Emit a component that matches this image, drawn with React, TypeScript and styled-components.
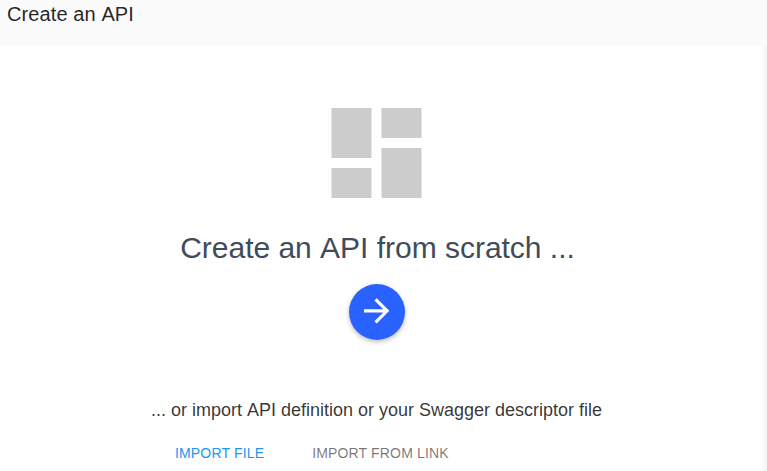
import React from "react";
import styled, { createGlobalStyle } from "styled-components";

const GlobalStyle = createGlobalStyle`
  * { box-sizing: border-box; }
  body { margin: 0; background: #fbfbfb; overflow: hidden; font-family: "Liberation Sans", Arial, sans-serif; font-kerning: none; }
`;

const Page = styled.div`
  display: flex;
  flex-direction: column;
  height: 471px;
`;

const Header = styled.header`
  height: 46px;
  flex: none;
  padding: 2px 7px 0;
`;

const Title = styled.h1`
  margin: 0;
  font-size: 20px;
  line-height: 24px;
  font-weight: 400;
  letter-spacing: 0.1px;
  color: rgba(0, 0, 0, 0.87);
`;

const Panel = styled.main`
  flex: 1;
  padding: 47px 14px 0 0;
  display: flex;
  flex-direction: column;
  align-items: center;
  background: linear-gradient(to left, #f3f3f3, #fcfcfc 4px, #fff 8px);
`;

const DashboardIcon = styled.svg`
  width: 120px;
  height: 120px;
  flex: none;
  fill: #ccc;
`;

const Heading = styled.h2`
  margin: 17px 0 0;
  padding-left: 2px;
  font-size: 30px;
  line-height: 36px;
  font-weight: 400;
  letter-spacing: -0.02px;
  color: #3f4c5a;
`;

const RoundButton = styled.button`
  display: grid;
  place-items: center;
  flex: none;
  width: 56px;
  height: 56px;
  margin-top: 18px;
  padding: 0 0 3px;
  border: 0;
  border-radius: 50%;
  background: #2962ff;
  box-shadow: 0 2px 5px rgba(0, 0, 0, 0.26);
  cursor: pointer;
`;

const ArrowIcon = styled.svg`
  width: 38px;
  height: 38px;
  fill: #fff;
`;

const Hint = styled.p`
  margin: 59px 0 0;
  font-size: 18px;
  line-height: 22px;
  color: rgba(0, 0, 0, 0.8);
`;

const Tabs = styled.nav`
  display: flex;
  align-self: flex-start;
  gap: 48px;
  margin: 22px 0 0 175px;
`;

const Tab = styled.button<{ $active?: boolean }>`
  padding: 0;
  border: 0;
  background: none;
  font-family: inherit;
  font-size: 14px;
  line-height: 20px;
  letter-spacing: 0.16px;
  text-transform: uppercase;
  white-space: nowrap;
  color: ${({ $active }) => ($active ? "#2196f3" : "rgba(0, 0, 0, 0.54)")};
  cursor: pointer;
`;

export default function App() {
  return (
    <Page>
      <GlobalStyle />
      <Header>
        <Title>Create an API</Title>
      </Header>
      <Panel>
        <DashboardIcon viewBox="0.1 0 24 24" aria-hidden="true">
          <path d="M3 13h8V3H3v10zm0 8h8v-6H3v6zm10 0h8V11h-8v10zm0-18v6h8V3h-8z" />
        </DashboardIcon>
        <Heading>Create an API from scratch ...</Heading>
        <RoundButton aria-label="Create an API">
          <ArrowIcon viewBox="0.2 0.1 24 24" aria-hidden="true">
            <path d="M12 4l-1.41 1.41L16.17 11H4v2h12.17l-5.58 5.59L12 20l8-8z" />
          </ArrowIcon>
        </RoundButton>
        <Hint>... or import API definition or your Swagger descriptor file</Hint>
        <Tabs>
          <Tab $active>Import file</Tab>
          <Tab>Import from link</Tab>
        </Tabs>
      </Panel>
    </Page>
  );
}
